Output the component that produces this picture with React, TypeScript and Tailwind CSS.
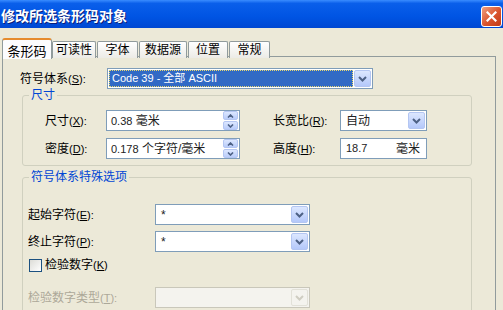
import React from 'react'

function Acc({ text, k, tail = ':' }: { text: string; k: string; tail?: string }) {
  return (
    <span className="whitespace-nowrap">
      {text}
      <span className="text-[11px]">
        (<span className="underline underline-offset-1">{k}</span>){tail}
      </span>
    </span>
  )
}

function DropBtn({ disabled = false }: { disabled?: boolean }) {
  return (
    <span
      className={
        disabled
          ? 'flex h-[17px] w-[17px] shrink-0 items-center justify-center rounded-[2px] border border-[#e2e1d8] bg-[#f4f3ee]'
          : 'flex h-[17px] w-[17px] shrink-0 items-center justify-center rounded-[2px] border border-[#b4c6f2] bg-[linear-gradient(to_bottom,#dce7ff,#b4c8fa)]'
      }
    >
      <svg width="9" height="6" viewBox="0 0 9 6">
        <path d="M1 1 L4.5 4.5 L8 1" fill="none" stroke={disabled ? '#cfcdc2' : '#4d6185'} strokeWidth="2" />
      </svg>
    </span>
  )
}

function Spin() {
  return (
    <span className="flex h-[19px] w-[15px] shrink-0 flex-col gap-px">
      <span className="flex h-[9px] items-center justify-center rounded-[2px] border border-[#b4c6f2] bg-[linear-gradient(to_bottom,#dce7ff,#b9ccfa)]">
        <svg width="7" height="4" viewBox="0 0 7 4">
          <path d="M1 3.5 L3.5 1 L6 3.5" fill="none" stroke="#4d6185" strokeWidth="1.6" />
        </svg>
      </span>
      <span className="flex h-[9px] items-center justify-center rounded-[2px] border border-[#b4c6f2] bg-[linear-gradient(to_bottom,#dce7ff,#b9ccfa)]">
        <svg width="7" height="4" viewBox="0 0 7 4">
          <path d="M1 0.5 L3.5 3 L6 0.5" fill="none" stroke="#4d6185" strokeWidth="1.6" />
        </svg>
      </span>
    </span>
  )
}

function Select({ value, width, disabled = false }: { value: string; width: string; disabled?: boolean }) {
  return (
    <div
      className={`flex h-[21px] items-center justify-between border p-px ${width} ${
        disabled ? 'border-[#c9c7ba] bg-[#f4f3ee]' : 'border-[#7f9db9] bg-white'
      }`}
    >
      <span className="pl-[4px] text-[#222]">{value}</span>
      <DropBtn disabled={disabled} />
    </div>
  )
}

function SpinInput({ value, unit }: { value: string; unit: string }) {
  return (
    <div className="flex h-[21px] w-[134px] items-center justify-between border border-[#7f9db9] bg-white p-px">
      <span className="pl-[3px] text-[#222]">
        <span className="text-[11px]">{value}</span> {unit}
      </span>
      <Spin />
    </div>
  )
}

const tabs = [
  { label: '可读性', w: 'w-[44px]' },
  { label: '字体', w: 'w-[41px]' },
  { label: '数据源', w: 'w-[48px]' },
  { label: '位置', w: 'w-[40px]' },
  { label: '常规', w: 'w-[41px]' },
]

export default function App() {
  return (
    <div className="h-[310px] w-[503px] overflow-hidden bg-[#ece9d8] text-[12px] text-black [font-family:'Liberation_Sans','Noto_Sans_CJK_SC',sans-serif]">
      {/* Title bar */}
      <div className="flex h-[28px] items-center justify-between bg-[linear-gradient(to_bottom,#3a8cff_0%,#0a5fea_12%,#0054e3_60%,#0048d2_100%)] pt-[4px]">
        <span className="pl-px text-[14px] font-bold text-white [text-shadow:1px_1px_0_#0a1e7a]">修改所选条形码对象</span>
        <span className="mr-px flex h-[21px] w-[21px] items-center justify-center rounded-[3px] border border-white bg-[linear-gradient(135deg,#f0a081,#d9532c_55%,#c23a17)]">
          <svg width="11" height="11" viewBox="0 0 11 11">
            <path d="M1.5 1.5 L9.5 9.5 M9.5 1.5 L1.5 9.5" stroke="white" strokeWidth="2.2" strokeLinecap="square" />
          </svg>
        </span>
      </div>

      {/* Tabs */}
      <div className="relative z-10 mt-[10px] flex h-[21px] items-start pl-[2px]">
        <div className="flex h-[21px] w-[50px] items-start justify-center rounded-t-[3px] border-x border-t-2 border-x-[#919b9c] border-t-[#e68b2c] bg-[#fcfcfe] pt-[2px] text-[13px]">
          条形码
        </div>
        {tabs.map((t, i) => (
          <div
            key={t.label}
            className={`mt-[3px] flex h-[17px] items-center justify-center rounded-t-[2px] border-x border-t border-[#919b9c] bg-[linear-gradient(to_bottom,#ffffff,#ecebe6)] ${t.w} ${
              i === 0 ? '' : 'ml-px'
            }`}
          >
            {t.label}
          </div>
        ))}
      </div>

      {/* Tab page */}
      <div className="-mt-[3px] ml-[2px] h-[260px] w-[494px] border-x border-t border-[#919b9c] pl-[17px] pt-[11px]">
        <div className="flex h-[21px] items-center">
          <span className="w-[87px]">
            <Acc text="符号体系" k="S" />
          </span>
          <div className="flex h-[21px] w-[266px] items-center justify-between border border-[#7f9db9] bg-white p-px">
            <span className="flex h-[17px] w-[244px] items-center border border-dotted border-[#e8d870] bg-[#316ac5] pl-[2px] text-[11px] text-white">
              Code 39 - 全部 ASCII
            </span>
            <DropBtn />
          </div>
        </div>

        <fieldset className="m-0 ml-[2px] w-[450px] rounded-[3px] border border-[#d0d0bf] p-0 pb-[6px]">
          <legend className="ml-[6px] px-[2px] leading-[12px] text-[#0046d5]">尺寸</legend>
          <div className="mt-[9px] grid grid-cols-[61px_134px_33px_67px_87px] items-center gap-y-[7px] pl-[22px]">
            <span>
              <Acc text="尺寸" k="X" />
            </span>
            <SpinInput value="0.38" unit="毫米" />
            <span />
            <span>
              <Acc text="长宽比" k="R" />
            </span>
            <Select value="自动" width="w-[87px]" />

            <span>
              <Acc text="密度" k="D" />
            </span>
            <SpinInput value="0.178" unit="个字符/毫米" />
            <span />
            <span>
              <Acc text="高度" k="H" />
            </span>
            <div className="flex h-[21px] w-[87px] items-center justify-between border border-[#7f9db9] bg-white pl-[5px] pr-[6px] text-[#222]">
              <span className="text-[11px]">18.7</span>
              <span>毫米</span>
            </div>
          </div>
        </fieldset>

        <fieldset className="m-0 ml-[2px] mt-[5px] h-[150px] w-[450px] rounded-[3px] border border-[#d0d0bf] p-0">
          <legend className="ml-[6px] px-[2px] leading-[12px] text-[#0046d5]">符号体系特殊选项</legend>
          <div className="mt-[21px] grid grid-cols-[127px_155px] items-center gap-y-[6px] pl-[5px]">
            <span>
              <Acc text="起始字符" k="E" />
            </span>
            <Select value="*" width="w-[155px]" />
            <span>
              <Acc text="终止字符" k="P" />
            </span>
            <Select value="*" width="w-[155px]" />
          </div>
          <div className="mt-[6px] flex h-[14px] items-center gap-[3px] pl-[6px]">
            <span className="h-[13px] w-[13px] border border-[#1c5180] bg-[linear-gradient(135deg,#dcdcd7,#ffffff)]" />
            <Acc text="检验数字" k="K" tail="" />
          </div>
          <div className="mt-[15px] grid grid-cols-[127px_155px] items-center pl-[5px]">
            <span className="text-[#aca899]">
              <Acc text="检验数字类型" k="T" />
            </span>
            <Select value="" width="w-[155px]" disabled />
          </div>
        </fieldset>
      </div>
    </div>
  )
}
